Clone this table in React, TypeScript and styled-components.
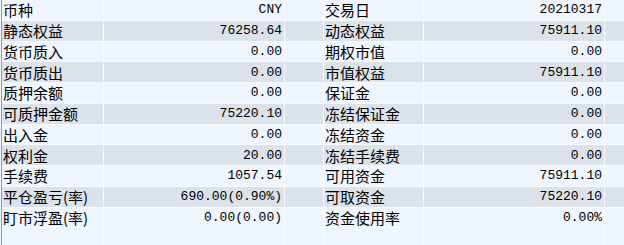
import React from "react";
import styled, { createGlobalStyle } from "styled-components";

const Global = createGlobalStyle`
  html, body { margin: 0; padding: 0; background: #eff5fc; }
  body { width: 624px; height: 245px; overflow: hidden; }
`;

const Grid = styled.div`
  width: 624px;
  height: 245px;
  box-sizing: border-box;
  margin-left: 1px;
  border-left: 1px solid #9c9c9c;
  background: #eff5fc;
  display: flex;
  flex-direction: column;
  overflow: hidden;
`;

const Row = styled.div<{ $alt?: boolean }>`
  display: grid;
  grid-template-columns: 102px 181px 39px 100px 181px 1fr;
  height: 20.75px;
  flex: none;
  box-sizing: border-box;
  border-bottom: 1px solid #f7f9fc;
  background: ${(p) => (p.$alt ? "#dce2ea" : "#eff5fc")};
`;

const Filler = styled(Row)`
  flex: 1;
  border-bottom: none;
`;

const Cell = styled.div<{ $right?: boolean }>`
  box-sizing: border-box;
  border-right: 1px solid #f7f9fc;
  display: flex;
  align-items: center;
  justify-content: ${(p) => (p.$right ? "flex-end" : "flex-start")};
  white-space: nowrap;
  overflow: hidden;
  color: #000;
`;

const Label = styled(Cell)`
  padding-left: 1px;
  font-family: "Noto Sans CJK SC", "Liberation Sans", sans-serif;
  font-size: 15px;
  line-height: 1;
`;

const Value = styled(Cell)`
  padding-right: 2px;
  font-family: "Liberation Mono", "Noto Sans CJK SC", monospace;
  font-size: 13px;
  line-height: 1;
`;

const Spacer = styled(Cell)``;
const LastCell = styled.div``;

type Item = [string, string, string, string];

const data: Item[] = [
  ["币种", "CNY", "交易日", "20210317"],
  ["静态权益", "76258.64", "动态权益", "75911.10"],
  ["货币质入", "0.00", "期权市值", "0.00"],
  ["货币质出", "0.00", "市值权益", "75911.10"],
  ["质押余额", "0.00", "保证金", "0.00"],
  ["可质押金额", "75220.10", "冻结保证金", "0.00"],
  ["出入金", "0.00", "冻结资金", "0.00"],
  ["权利金", "20.00", "冻结手续费", "0.00"],
  ["手续费", "1057.54", "可用资金", "75911.10"],
  ["平仓盈亏(率)", "690.00(0.90%)", "可取资金", "75220.10"],
  ["盯市浮盈(率)", "0.00(0.00)", "资金使用率", "0.00%"],
];

export default function App() {
  return (
    <>
      <Global />
      <Grid>
        {data.map(([l1, v1, l2, v2], i) => (
          <Row key={l1} $alt={i % 2 === 1}>
            <Label>{l1}</Label>
            <Value $right>{v1}</Value>
            <Spacer />
            <Label>{l2}</Label>
            <Value $right>{v2}</Value>
            <LastCell />
          </Row>
        ))}
        <Filler>
          <Spacer />
          <Spacer />
          <Spacer />
          <Spacer />
          <Spacer />
          <LastCell />
        </Filler>
      </Grid>
    </>
  );
}
